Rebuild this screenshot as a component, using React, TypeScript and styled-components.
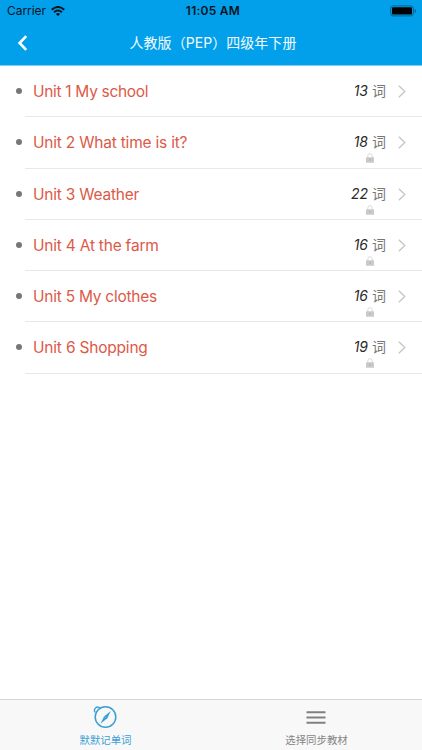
import React from "react";
import styled, { createGlobalStyle } from "styled-components";

const GlobalStyle = createGlobalStyle`
  * { box-sizing: border-box; }
  body {
    margin: 0;
    background: #fff;
    font-family: Inter, "Noto Sans CJK SC", sans-serif;
  }
`;

const Screen = styled.div`
  display: flex;
  flex-direction: column;
  width: 422px;
  height: 750px;
  overflow: hidden;
  background: #fff;
`;

const Header = styled.header`
  flex: none;
  height: 66px;
  background: #02a0ea;
  border-bottom: 1px solid #7fd0f5;
`;

const StatusBar = styled.div`
  display: grid;
  grid-template-columns: 1fr auto 1fr;
  align-items: center;
  height: 22px;
  padding: 0 5px 0 7px;
  color: #06141f;
`;

const Carrier = styled.div`
  display: flex;
  align-items: center;
  gap: 5px;
  font-size: 12px;
  line-height: 22px;
  letter-spacing: -0.06px;
`;

const Clock = styled.div`
  padding-left: 2px;
  font-size: 12px;
  font-weight: 600;
  line-height: 22px;
  letter-spacing: 0.25px;
`;

const Battery = styled.svg`
  justify-self: end;
`;

const NavBar = styled.nav`
  display: grid;
  grid-template-columns: 60px 1fr 60px;
  align-items: center;
  height: 43px;
`;

const Back = styled.button`
  display: flex;
  padding: 0 0 2px 17px;
  border: 0;
  background: none;
`;

const Title = styled.h1`
  margin: 0;
  padding: 0 0 1px 4px;
  text-align: center;
  font-size: 14px;
  font-weight: 400;
  line-height: 40px;
  letter-spacing: 0.05px;
  color: #f2fbff;
`;

const List = styled.ul`
  flex: 1;
  margin: 0;
  padding: 0;
  list-style: none;
`;

const Row = styled.li`
  display: flex;
  height: 51.25px;
  padding-left: 16px;
`;

const Bullet = styled.span`
  flex: none;
  width: 6px;
  height: 6px;
  margin-top: 22px;
  border-radius: 50%;
  background: #777;
`;

const Content = styled.div`
  display: flex;
  flex: 1;
  margin-left: 3px;
  padding: 0 16px 0 8px;
  border-bottom: 1px solid #e8e8e8;
`;

const Unit = styled.span<{ $spacing: number }>`
  flex: 1;
  font-size: 15.5px;
  font-weight: 400;
  line-height: 51px;
  letter-spacing: ${(p) => p.$spacing}px;
  color: #dc5a48;
  white-space: nowrap;
`;

const Count = styled.div`
  display: flex;
  flex-direction: column;
  align-items: flex-end;
  margin-right: 12px;
`;

const CountText = styled.div`
  height: 36px;
  font-size: 14px;
  font-weight: 400;
  line-height: 50px;
  color: #777;
  white-space: nowrap;
`;

const Amount = styled.em`
  margin-right: 4px;
  font-size: 14px;
  color: #2a2a2a;
`;

const Lock = styled.svg`
  margin-right: 12px;
`;

const Arrow = styled.svg`
  flex: none;
  margin-top: 19px;
`;

const Tabs = styled.footer`
  display: grid;
  flex: none;
  grid-template-columns: 1fr 1fr;
  height: 51px;
  background: #f8f8f8;
  border-top: 1px solid #d4d4d4;
`;

const Tab = styled.div<{ $active?: boolean }>`
  display: flex;
  flex-direction: column;
  align-items: center;
  padding-top: 4px;
  font-size: 10.4px;
  font-weight: 400;
  line-height: 16px;
  color: ${(p) => (p.$active ? "#3a9fd5" : "#858585")};
`;

const TabIcon = styled.svg`
  display: block;
  margin: 0 2px 4px 0;
`;

const units = [
  { name: "Unit 1 My school", count: 13, locked: false, spacing: -0.31 },
  { name: "Unit 2 What time is it?", count: 18, locked: true, spacing: -0.21 },
  { name: "Unit 3 Weather", count: 22, locked: true, spacing: -0.22 },
  { name: "Unit 4 At the farm", count: 16, locked: true, spacing: -0.22 },
  { name: "Unit 5 My clothes", count: 16, locked: true, spacing: -0.25 },
  { name: "Unit 6 Shopping", count: 19, locked: true, spacing: -0.2 },
];

export default function App() {
  return (
    <Screen>
      <GlobalStyle />
      <Header>
        <StatusBar>
          <Carrier>
            Carrier
            <svg width="14" height="10" viewBox="0 0 14 10" fill="none" stroke="currentColor" strokeWidth="2">
              <path d="M.7 3.7Q7-1.7 13.3 3.7M3 6.2Q7 2.8 11 6.2" />
              <path d="M4.9 7.9Q7 6.2 9.1 7.9L7 10Z" fill="currentColor" stroke="none" />
            </svg>
          </Carrier>
          <Clock>11:05 AM</Clock>
          <Battery width="27" height="12" viewBox="0 0 27 12">
            <rect x=".7" y=".9" width="22.6" height="10" rx="2.4" fill="none" stroke="#075f8c" />
            <rect x="2" y="2.2" width="20" height="7.4" rx="1" fill="#000" />
            <path d="M24.7 4v4q1.5-.6 1.5-2t-1.5-2z" fill="#075f8c" />
          </Battery>
        </StatusBar>
        <NavBar>
          <Back aria-label="返回">
            <svg width="11" height="16" viewBox="0 0 11 16" fill="none" stroke="#fff" strokeWidth="2.6">
              <path d="M9.2 1.2 2.6 8l6.6 6.8" />
            </svg>
          </Back>
          <Title>人教版（PEP）四级年下册</Title>
        </NavBar>
      </Header>
      <List>
        {units.map((unit) => (
          <Row key={unit.name}>
            <Bullet />
            <Content>
              <Unit $spacing={unit.spacing}>{unit.name}</Unit>
              <Count>
                <CountText>
                  <Amount>{unit.count}</Amount>词
                </CountText>
                {unit.locked && (
                  <Lock width="8" height="10" viewBox="0 0 8 10">
                    <path d="M1.8 5V2.9a2.2 2.2 0 0 1 4.4 0V5" fill="none" stroke="#dadada" />
                    <rect y="4.2" width="8" height="5.5" rx=".5" fill="#cacaca" />
                    <path d="M4 5.9v1.8" stroke="#a8a8a8" />
                  </Lock>
                )}
              </Count>
              <Arrow width="8" height="13" viewBox="0 0 8 13" fill="none" stroke="#c5c5c9" strokeWidth="1.3">
                <path d="m.8.7 6 5.8-6 5.8" />
              </Arrow>
            </Content>
          </Row>
        ))}
      </List>
      <Tabs>
        <Tab $active>
          <TabIcon width="26" height="25" viewBox="0 0 26 25" fill="none" stroke="currentColor">
            <circle cx="13.5" cy="13" r="10.3" strokeWidth="1.5" />
            <path d="M3.1 8.4a2.8 2.8 0 1 1 5.3-4" strokeWidth="1.4" />
            <path d="m18.7 7-3.3 7.3-7 5.4 3.7-7.3z" fill="currentColor" stroke="none" />
            <path d="m12.6 12.8 1.7 1.3" stroke="#f8f8f8" strokeWidth=".3" />
          </TabIcon>
          默默记单词
        </Tab>
        <Tab>
          <TabIcon width="20" height="25" viewBox="0 0 20 25">
            <path d="M.5 8.2h19M.5 13.5h19M.5 18.8h19" stroke="#808080" strokeWidth="2" />
          </TabIcon>
          选择同步教材
        </Tab>
      </Tabs>
    </Screen>
  );
}
